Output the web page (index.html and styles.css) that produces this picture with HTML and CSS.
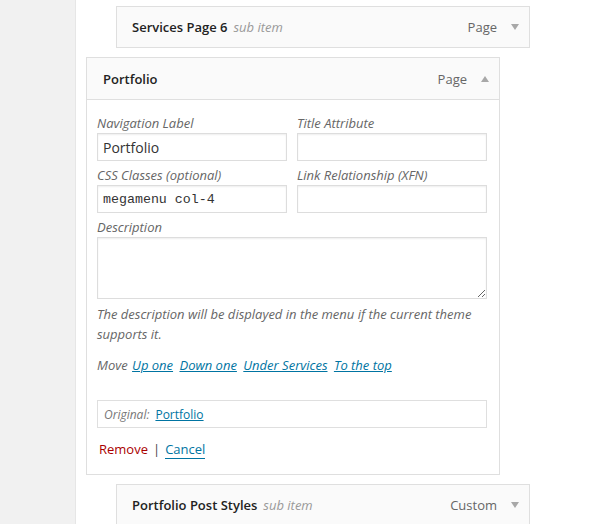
FILE: index.html
```html
<!DOCTYPE html>
<html>
<head>
<meta charset="utf-8">
<link rel="stylesheet" href="styles.css">
</head>
<body>
<div class="page">
  <div class="sidebar"></div>
  <div class="main">
    <div class="item sub">
      <div class="handle">
        <span class="title">Services Page 6</span><span class="subtag">sub item</span>
        <span class="type">Page</span><span class="arrow down"></span>
      </div>
    </div>
    <div class="item open">
      <div class="handle">
        <span class="title">Portfolio</span>
        <span class="type">Page</span><span class="arrow up"></span>
      </div>
      <div class="settings">
        <div class="fields">
          <div class="field">
            <label class="lbl">Navigation Label</label>
            <input class="txt" type="text" value="Portfolio">
          </div>
          <div class="field">
            <label class="lbl">Title Attribute</label>
            <input class="txt" type="text" value="">
          </div>
          <div class="field">
            <label class="lbl">CSS Classes (optional)</label>
            <input class="txt mono" type="text" value="megamenu col-4">
          </div>
          <div class="field">
            <label class="lbl">Link Relationship (XFN)</label>
            <input class="txt" type="text" value="">
          </div>
          <div class="field wide">
            <label class="lbl desc-lbl">Description</label>
            <textarea class="area"></textarea>
          </div>
        </div>
        <p class="hint">The description will be displayed in the menu if the current theme supports it.</p>
        <p class="move"><span class="move-lbl">Move</span> <a class="lnk" href="#">Up one</a> <a class="lnk" href="#">Down one</a> <a class="lnk" href="#">Under Services</a> <a class="lnk" href="#">To the top</a></p>
        <div class="original"><span class="orig-lbl">Original:</span> <a class="lnk plain" href="#">Portfolio</a></div>
        <p class="actions"><a class="remove" href="#">Remove</a><span class="sep">|</span><a class="cancel" href="#">Cancel</a></p>
      </div>
    </div>
    <div class="item sub last">
      <div class="handle">
        <span class="title">Portfolio Post Styles</span><span class="subtag">sub item</span>
        <span class="type">Custom</span><span class="arrow down"></span>
      </div>
    </div>
  </div>
</div>
</body>
</html>
```
FILE: styles.css
```css
html, body {
  margin: 0;
  padding: 0;
  overflow: hidden;
  background: #fff;
}
body {
  font-family: "Open Sans", "Liberation Sans", sans-serif;
  font-size: 13px;
  color: #444;
}
.page {
  display: flex;
  height: 524px;
  overflow: hidden;
}
.sidebar {
  width: 75px;
  flex: none;
  background: #f1f1f1;
  border-right: 1px solid #e6e6e6;
}
.main {
  padding: 6px 0 0 10px;
  display: flex;
  flex-direction: column;
}
.item {
  width: 414px;
}
.item.sub {
  margin-left: 30px;
}
.item.open {
  margin-top: 9px;
}
.item.last {
  margin-top: 9px;
}
.handle {
  box-sizing: border-box;
  height: 42px;
  border: 1px solid #dfdfdf;
  background: #fafafa;
  display: flex;
  align-items: center;
  padding: 0 10px 0 15px;
  line-height: 20px;
}
.open .handle {
  height: 43px;
  padding-left: 16px;
}
.title {
  font-weight: 600;
  color: #222;
}
.subtag {
  font-style: italic;
  color: #999;
  margin-left: 6px;
}
.type {
  margin-left: auto;
  color: #666;
}
.arrow {
  width: 0;
  height: 0;
  margin-left: 14px;
  margin-right: 0;
  border-left: 4px solid transparent;
  border-right: 4px solid transparent;
}
.arrow.down {
  border-top: 6px solid #a8a8a8;
}
.arrow.up {
  border-bottom: 6px solid #a8a8a8;
}
.settings {
  border: 1px solid #dfdfdf;
  border-top: none;
  padding: 14px 10px 15px 10px;
}
.fields {
  display: grid;
  grid-template-columns: 190px 190px;
  column-gap: 10px;
  row-gap: 5px;
}
.field {
  display: flex;
  flex-direction: column;
}
.field.wide {
  grid-column: 1 / 3;
}
.lbl {
  font-style: italic;
  color: #666;
  line-height: 19px;
}
.txt {
  box-sizing: border-box;
  width: 190px;
  height: 28px;
  margin: 0;
  border: 1px solid #dddddd;
  box-shadow: inset 0 1px 2px rgba(0, 0, 0, 0.07);
  padding: 3px 5px;
  font-family: "Open Sans", "Liberation Sans", sans-serif;
  font-size: 14px;
  color: #333;
  background: #fff;
  outline: none;
}
.txt.mono {
  font-family: "Liberation Mono", "DejaVu Sans Mono", monospace;
  font-size: 13.3px;
}
.area {
  box-sizing: border-box;
  display: block;
  width: 390px;
  height: 62px;
  margin: 0;
  border: 1px solid #dddddd;
  box-shadow: inset 0 1px 2px rgba(0, 0, 0, 0.07);
  padding: 3px 5px;
  font-family: "Open Sans", "Liberation Sans", sans-serif;
}
.hint {
  margin: 5px 0 0;
  font-style: italic;
  color: #666;
  line-height: 20px;
}
.move {
  margin: 11px 0 0;
  font-style: italic;
  color: #666;
  line-height: 20px;
  word-spacing: 3px;
}
.move-lbl {
  margin-right: -2px;
}
.lnk {
  color: #0074a2;
  text-decoration: underline;
  word-spacing: 0;
}
.original {
  margin-top: 25px;
  box-sizing: border-box;
  width: 390px;
  height: 28px;
  border: 1px solid #dfdfdf;
  padding: 0 6px;
  display: flex;
  align-items: center;
  font-size: 12px;
}
.orig-lbl {
  font-style: italic;
  color: #777;
  margin-right: 6px;
}
.actions {
  margin: 11px 0 0;
  padding-left: 2px;
  line-height: 20px;
  display: flex;
  align-items: center;
}
.remove {
  color: #a00;
  text-decoration: none;
}
.sep {
  color: #444;
  margin: 0 5px;
}
.cancel {
  color: #0074a2;
  text-decoration: none;
  border-bottom: 1px solid #0074a2;
  line-height: 18px;
}
```
